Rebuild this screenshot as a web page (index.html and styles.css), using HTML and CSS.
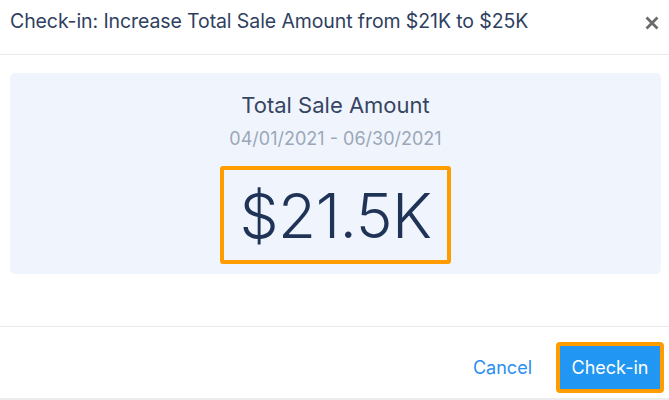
FILE: index.html
```html
<!DOCTYPE html>
<html>
<head>
<meta charset="utf-8">
<link rel="stylesheet" href="styles.css">
</head>
<body>
<div class="modal">
  <div class="header">
    <div class="title">Check-in: Increase Total Sale Amount from $21K to $25K</div>
    <div class="close">
      <svg width="14" height="14" viewBox="0 0 14 14"><path d="M1.5 1.5 L12.5 12.5 M12.5 1.5 L1.5 12.5" stroke="#6b6b6b" stroke-width="2.8" stroke-linecap="butt"/></svg>
    </div>
  </div>
  <div class="body">
    <div class="panel">
      <div class="metric-name">Total Sale Amount</div>
      <div class="metric-date">04/01/2021 - 06/30/2021</div>
      <div class="metric-value">$21.5K</div>
    </div>
  </div>
  <div class="footer">
    <button class="cancel">Cancel</button>
    <button class="primary">Check-in</button>
  </div>
</div>
</body>
</html>
```
FILE: styles.css
```css
* { box-sizing: border-box; }
html, body { margin: 0; padding: 0; background: #fff; }
body { font-family: Inter, "Noto Sans", sans-serif; width: 669px; height: 400px; overflow: hidden; }
.modal { display: flex; flex-direction: column; height: 400px; border-bottom: 2px solid #ececec; }
.header { height: 55px; display: flex; align-items: center; justify-content: space-between; padding: 0 10px 12px 10px; border-bottom: 1px solid #e8ecef; }
.title { font-size: 19.5px; color: #2f3f5f; letter-spacing: -0.1px; }
.close { display: flex; align-items: center; padding-right: 0; margin-top: 3px; }
.body { flex: 1; padding: 18px 8px 0 10px; }
.panel { background: #f0f5fd; border-radius: 5px; height: 201px; display: flex; flex-direction: column; align-items: center; padding-top: 19px; }
.metric-name { font-size: 22px; color: #374563; line-height: 26px; }
.metric-date { font-size: 18px; color: #9ba7b8; line-height: 22px; margin-top: 10px; }
.metric-value { margin-top: 16px; border: 4px solid #ff9c00; border-radius: 3px; width: 231px; height: 98px; display: flex; align-items: center; justify-content: center; font-size: 62px; font-weight: 300; color: #1f3356; letter-spacing: -0.5px; }
.footer { height: 72px; border-top: 1px solid #e8ecef; display: flex; align-items: flex-start; justify-content: flex-end; padding: 15px 5px 0 0; gap: 24px; }
button { font-family: Inter, "Noto Sans", sans-serif; cursor: pointer; }
.cancel { background: none; border: none; color: #2a8ff0; font-size: 18px; padding: 0; height: 51px; }
.primary { background: #2196f3; color: #fff; border: 4px solid #ff9c00; border-radius: 4px; font-size: 18px; width: 108px; height: 51px; padding: 0; }
```
